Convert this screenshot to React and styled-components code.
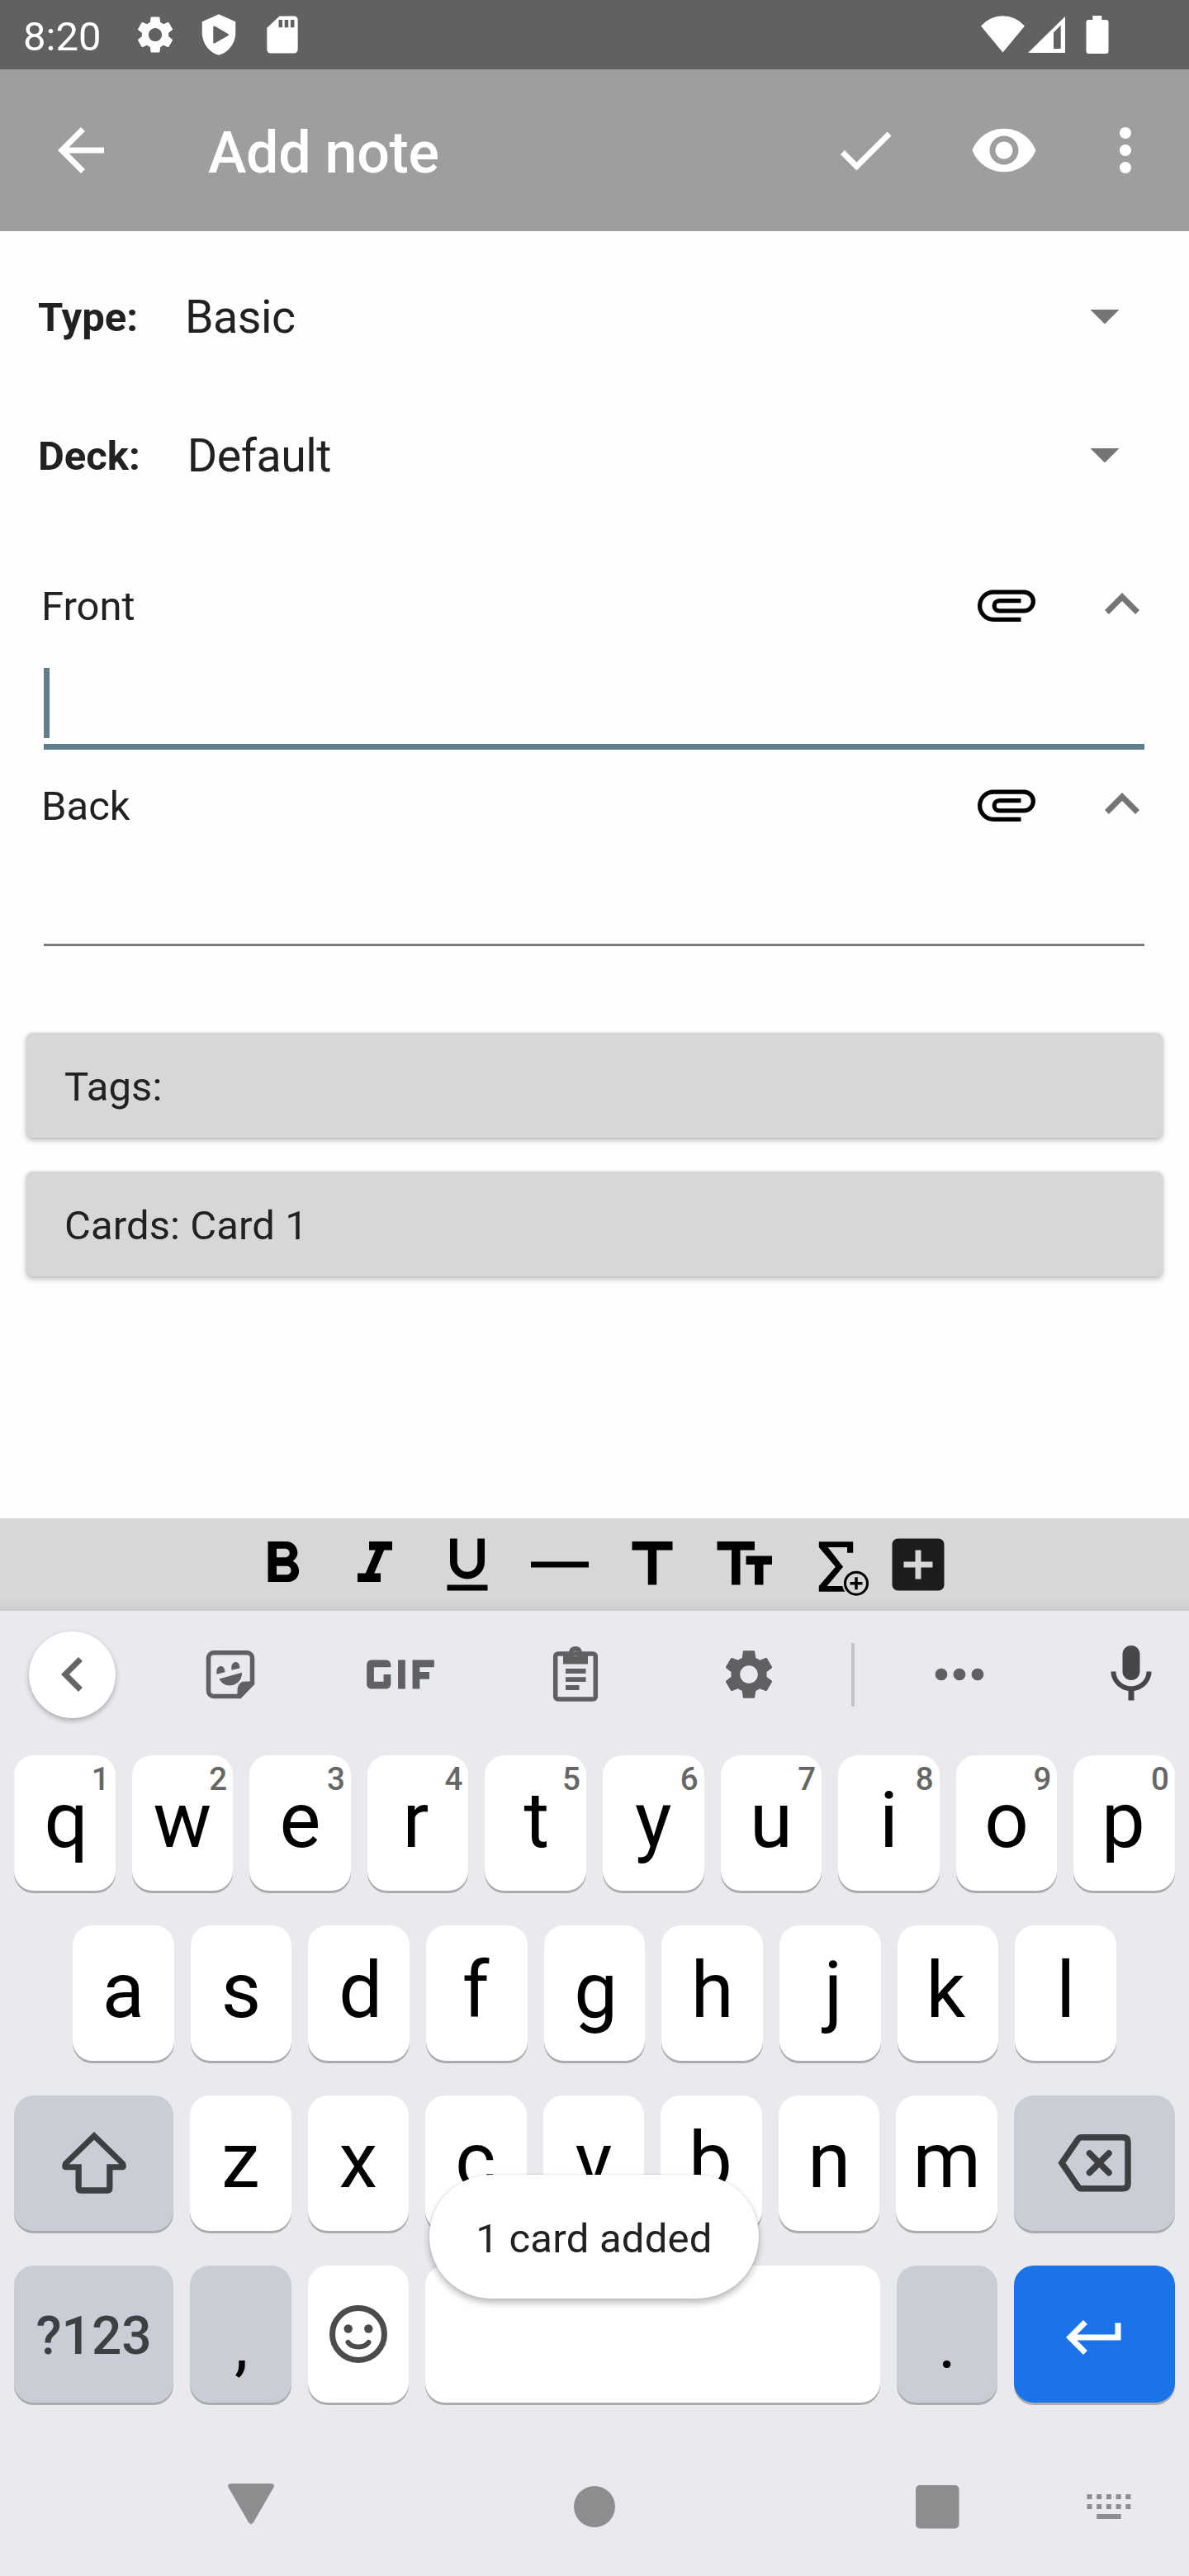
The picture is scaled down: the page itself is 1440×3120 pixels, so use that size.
import React from "react";
import styled, { createGlobalStyle } from "styled-components";
import {
  MdSettings,
  MdArrowBack,
  MdCheck,
  MdVisibility,
  MdMoreVert,
  MdMoreHoriz,
  MdMic,
  MdGif,
  MdArrowDropDown,
  MdExpandLess,
  MdChevronLeft,
  MdFormatBold,
  MdFormatItalic,
  MdFormatSize,
  MdTitle,
  MdAddBox,
} from "react-icons/md";

const GlobalStyle = createGlobalStyle`
  *, *::before, *::after { box-sizing: border-box; }
  body { margin: 0; background: #fefefe; }
  svg { display: block; flex: none; }
`;

const Screen = styled.div`
  position: relative;
  width: 1440px;
  height: 3120px;
  overflow: hidden;
  display: flex;
  flex-direction: column;
  background: #fefefe;
  color: #212121;
  font-family: Roboto, "Noto Sans", sans-serif;
`;

/* ---------- status bar ---------- */
const StatusBar = styled.header`
  height: 84px;
  flex: none;
  display: flex;
  align-items: center;
  padding: 0 97px 0 28px;
  background: #616161;
  color: #fff;
`;
const Clock = styled.span`
  width: 133px;
  height: 84px;
  font-size: 49px;
  line-height: 89px;
  white-space: nowrap;
`;
const Notifications = styled.div`
  display: flex;
  gap: 23px;
`;
const Signals = styled.div`
  margin-left: auto;
  display: flex;
  align-items: center;
`;

/* ---------- app bar ---------- */
const AppBar = styled.div`
  height: 196px;
  flex: none;
  display: flex;
  align-items: center;
  padding: 0 35px 0 56px;
  background: #9e9e9e;
  color: #fff;
`;
const Title = styled.h1`
  margin: 0 auto 0 112px;
  padding-top: 5px;
  font-size: 70px;
  font-weight: 500;
  line-height: 84px;
  letter-spacing: -0.3px;
`;
const Action = styled.div`
  margin-right: ${(p) => p.$gap || 0}px;
`;

/* ---------- form ---------- */
const Form = styled.main`
  height: 1559px;
  flex: none;
  display: flex;
  flex-direction: column;
  padding-top: 18px;
`;
const SelectRow = styled.div`
  height: 168px;
  flex: none;
  display: flex;
  align-items: center;
  padding: 0 60px 0 46px;
  svg { color: #757575; }
`;
const Label = styled.span`
  padding-top: 4px;
  margin-right: 57px;
  font-size: 49px;
  font-weight: 700;
`;
const Value = styled.span`
  flex: 1;
  padding-top: 5px;
  font-size: 55.5px;
  letter-spacing: -0.5px;
`;
const Field = styled.section`
  margin-top: ${(p) => p.$top}px;
`;
const FieldHead = styled.div`
  height: 84px;
  display: flex;
  align-items: center;
  padding: 0 39px 0 50px;
`;
const FieldName = styled.span`
  flex: 1;
  padding-top: 4px;
  font-size: 49px;
`;
const Clip = styled.div`
  margin-right: 56px;
  color: #000;
`;
const Collapse = styled.div`
  color: #757575;
`;
const Input = styled.div`
  height: ${(p) => (p.$focused ? 134 : 130)}px;
  margin: 0 54px 0 53px;
  padding-top: 35px;
  border-bottom: ${(p) => (p.$focused ? "7px solid #607d8b" : "3px solid #7a7a7a")};
`;
const Caret = styled.div`
  width: 7px;
  height: 85px;
  background: #607d8b;
`;
const Buttons = styled.div`
  margin: 105px 32px 0;
  display: flex;
  flex-direction: column;
  gap: 41px;
`;
const GreyButton = styled.div`
  height: 127px;
  display: flex;
  align-items: center;
  padding: 3px 46px 0;
  border-radius: 7px;
  background: #d6d8d7;
  box-shadow: 0 3px 7px rgba(0, 0, 0, 0.27), 0 0 3px rgba(0, 0, 0, 0.08);
  font-size: 49px;
  letter-spacing: 0.1px;
`;

/* ---------- formatting bar ---------- */
const FormatBar = styled.div`
  height: 112px;
  flex: none;
  display: flex;
  align-items: center;
  gap: 28px;
  padding-left: 300px;
  background: linear-gradient(to top, #cccecd 0, #d6d8d7 14px);
  color: #000;
`;
const Flipped = styled.div`
  transform: translateX(1.5px) scaleX(-1);
`;
const AddTool = styled.div`
  margin-left: -14px;
  color: #1c1c1c;
`;

/* ---------- keyboard ---------- */
const Keyboard = styled.div`
  flex: 1;
  display: flex;
  flex-direction: column;
  background: #e8eaed;
`;
const Strip = styled.div`
  height: 154px;
  flex: none;
  display: flex;
  align-items: center;
  padding-left: 35px;
  color: #5f6062;
`;
const StripItem = styled.div`
  margin-left: ${(p) => p.$gap}px;
  color: ${(p) => p.$color || "inherit"};
`;
const RoundButton = styled.div`
  width: 105px;
  height: 105px;
  display: flex;
  align-items: center;
  justify-content: center;
  border-radius: 50%;
  background: #fff;
  color: #656668;
  box-shadow: 0 3px 6px rgba(0, 0, 0, 0.28);
`;
const Divider = styled.div`
  width: 4px;
  height: 77px;
  margin-left: 88px;
  background: #c3c4c8;
`;
const Rows = styled.div`
  padding: 21px 17px 0;
  display: flex;
  flex-direction: column;
  gap: 42px;
`;
const Row = styled.div`
  height: ${(p) => p.$height || 164}px;
  padding: 0 ${(p) => p.$inset || 0}px;
  display: flex;
  gap: 20px;
`;
const fills = { light: "#fff", grey: "#cbcdd6", blue: "#1a73e8" };
const Key = styled.div`
  position: relative;
  flex: ${(p) => (p.$width ? `0 0 ${p.$width}px` : "1 1 0")};
  min-width: 0;
  display: flex;
  align-items: center;
  justify-content: center;
  padding-top: ${(p) => p.$drop || 0}px;
  padding-bottom: ${(p) => p.$lift || 0}px;
  border-radius: 24px;
  background: ${(p) => fills[p.$tone || "light"]};
  box-shadow: 0 3px 0 #a9abad;
  color: ${(p) => p.$color || "#000"};
  font-size: ${(p) => p.$size || 94}px;
  font-weight: ${(p) => p.$weight || 400};
  line-height: 1;
`;
/* Glyphs sit centred by their ink, so side bearings are evened out here. */
const Glyph = styled.span`
  margin-left: ${(p) => 2 * (p.$nudge || 0)}px;
`;
const Hint = styled.span`
  position: absolute;
  top: 10px;
  right: 7px;
  font-size: 38.5px;
  font-weight: 500;
  color: #666;
`;

/* ---------- system navigation ---------- */
const NavBar = styled.nav`
  height: 168px;
  margin-top: auto;
  display: flex;
  align-items: center;
  padding-left: 262px;
`;
const NavItem = styled.div`
  margin-left: ${(p) => p.$gap || 0}px;
`;

const Toast = styled.div`
  position: absolute;
  left: 520px;
  top: 2634px;
  width: 399px;
  height: 150px;
  display: flex;
  align-items: center;
  justify-content: center;
  padding-top: 4px;
  border-radius: 75px;
  background: #fff;
  box-shadow: 0 5px 9px rgba(0, 0, 0, 0.27), 0 0 3px rgba(0, 0, 0, 0.1);
  font-size: 49px;
  letter-spacing: 0.25px;
  white-space: nowrap;
`;

/* ---------- drawings ---------- */
const ShieldPlay = () => (
  <svg width="54" height="54" viewBox="0 0 24 24" fill="#fff">
    <path
      fillRule="evenodd"
      d="M12 1 3 5v6c0 5.55 3.84 10.74 9 12 5.16-1.26 9-6.45 9-12V5ZM9 7.8v8.3c0 .5.5.7.9.4L17 12.5c.4-.3.4-.8 0-1L9.9 7.4c-.4-.3-.9 0-.9.4Z"
    />
  </svg>
);
const SdCard = () => (
  <svg width="54" height="54" viewBox="0 0 24 24" fill="#fff">
    <path d="M18 2h-7.500L3.700 8.300V20c0 1.100.9 2 2 2H18.300c1.100 0 2-.9 2-2V4c0-1.100-.9-2-2-2zM12 8.100h-2V4h2zm3.200 0h-2V4h2zm3.200 0h-2V4h2z" />
  </svg>
);
const Wifi = () => (
  <svg width="57" height="46" viewBox="0 0 57 46" fill="#fff">
    <path d="M0 12.500A34.700 34.700 0 0 1 53 12.500L26.500 44.500Z" />
  </svg>
);
const Cell = () => (
  <svg width="70" height="46" viewBox="0 0 70 46" fill="#fff">
    <path fillRule="evenodd" d="M0 45 45 1V45ZM31 20.500V40h8.700V11.500Z" />
  </svg>
);
const Battery = () => (
  <svg width="28" height="46" viewBox="0 0 28 46" fill="#fff">
    <path d="M8.300 0h11v5H24.500Q27.500 5 27.500 8V43Q27.500 46 24.500 46H3.500Q.5 46 .5 43V8Q.5 5 3.500 5H8.300Z" />
  </svg>
);
const Paperclip = () => (
  <svg width="84" height="84" viewBox="0 0 24 24" fill="currentColor">
    <path d="M7.500 18A5.500 5.500 0 0 1 2 12.500 5.500 5.500 0 0 1 7.500 7H18a4 4 0 0 1 4 4 4 4 0 0 1-4 4H9.500A2.500 2.500 0 0 1 7 12.500 2.500 2.500 0 0 1 9.500 10H17v1.500H9.500a1 1 0 0 0-1 1 1 1 0 0 0 1 1H18A2.500 2.500 0 0 0 20.500 11 2.500 2.500 0 0 0 18 8.500H7.500a4 4 0 0 0-4 4 4 4 0 0 0 4 4H17V18Z" />
  </svg>
);
const UnderlineIcon = () => (
  <svg width="84" height="84" viewBox="0 0 24 24">
    <path d="M7.250 3v8a4.750 4.750 0 0 0 9.500 0V3" fill="none" stroke="#000" strokeWidth="2.500" />
    <path d="M5 19h14v2H5z" />
  </svg>
);
const RuleIcon = () => (
  <svg width="84" height="84" viewBox="0 0 24 24">
    <path d="M2 11h20v2H2z" />
  </svg>
);
const SigmaAdd = () => (
  <svg width="84" height="84" viewBox="0 0 84 84">
    <path d="M19.800 14.300H61.200V27.700H54V21H30.700L49.100 44.700 29.600 68H52V74.700H19.800V68L39.900 44.700 19.800 21Z" />
    <circle cx="65" cy="64.700" r="17" fill="#d6d8d7" />
    <circle cx="65" cy="64.700" r="13.500" fill="none" stroke="#000" strokeWidth="3" />
    <path d="M57.500 64.700h15M65 57.200v15" stroke="#000" strokeWidth="3.500" />
  </svg>
);
const Sticker = () => (
  <svg width="84" height="84" viewBox="0 0 84 84">
    <path
      d="M22 15.700H62A6.500 6.500 0 0 1 68.500 22.200V53L53.500 68.500H22A6.500 6.500 0 0 1 15.500 62V22.200A6.500 6.500 0 0 1 22 15.700Z"
      fill="none"
      stroke="currentColor"
      strokeWidth="5.500"
    />
    <g fill="currentColor">
      <path d="M71 50.500 54 71H50.500V60Q51.500 50.500 60 50.500Z" />
      <path d="M25.500 41.700c-1-5 1-9.500 4.700-9.700 3.300-.2 5.300 3 5.300 7.300Z" />
      <path d="M43.500 36.800c-1-5 1-9.500 4.700-9.700 3.300-.2 5.300 3 5.300 7.300Z" />
      <path d="M28.500 47.500 56 39.700C56.500 48 50 55.500 41 55.500 36 55.500 31 52.500 28.500 47.500Z" />
    </g>
  </svg>
);
const Clipboard = () => (
  <svg width="84" height="84" viewBox="0 0 84 84">
    <rect x="17.700" y="17" width="48.600" height="55" rx="3" fill="none" stroke="currentColor" strokeWidth="5.500" />
    <g fill="currentColor">
      <path
        fillRule="evenodd"
        d="M27 15H34Q35 8 42 8T50 15H57V29.500H27ZM42 13.800a3.200 3.200 0 1 0 0 6.400a3.200 3.200 0 1 0 0-6.400Z"
      />
      <path d="M30 35h24.500v6H30zM30 45.300h24.500v5.800H30zM30 55h16.500v6H30z" />
    </g>
  </svg>
);
const ShiftIcon = () => (
  <svg width="84" height="84" viewBox="71 2578 84 84" fill="#3e3f41">
    <path
      fillRule="evenodd"
      d="M113 2582 150.500 2618.500Q154.500 2628.300 146 2628.300H135.500V2650Q135.500 2656.700 129 2656.700H97Q90.500 2656.700 90.500 2650V2628.300H80Q71.500 2628.300 75.500 2618.500ZM113 2591.700 82.600 2621.200H97.800V2649.300H128.200V2621.200H143.400Z"
    />
  </svg>
);
const BackspaceIcon = () => (
  <svg width="96" height="84" viewBox="1276 2582 96 84" fill="none" stroke="#3e3f41" strokeWidth="7.500">
    <path d="M1284 2623.700 1304 2594.500Q1305.300 2592.800 1307 2592.800H1358Q1364 2592.800 1364 2598.500V2649Q1364 2654.700 1358 2654.700H1307Q1305.300 2654.700 1304 2653Z" />
    <path d="M1317.500 2612 1341 2635.500M1341 2612 1317.500 2635.500" strokeLinecap="round" />
  </svg>
);
const SmileIcon = () => (
  <svg width="84" height="84" viewBox="0 0 84 84" fill="none" stroke="#4a4b4b">
    <circle cx="42" cy="42" r="31.500" strokeWidth="7" />
    <circle cx="29.700" cy="35.500" r="5.200" fill="#4a4b4b" stroke="none" />
    <circle cx="54.300" cy="35.500" r="5.200" fill="#4a4b4b" stroke="none" />
    <path d="M29.500 52Q33.500 57.500 42 57.500T54.500 52" strokeWidth="6" strokeLinecap="round" />
  </svg>
);
const ReturnIcon = () => (
  <svg width="84" height="84" viewBox="0 0 24 24" fill="#fff">
    <path d="M19 7v4H5.830l3.580-3.590L8 6l-6 6 6 6 1.410-1.410L5.830 13H21V7z" />
  </svg>
);
const NavDown = () => (
  <svg width="84" height="84" viewBox="0 0 84 84" fill="#8c8d8f">
    <path d="M18 14H66Q71 14 69.500 18.500L45 61Q42 65 39 61L14.500 18.500Q13 14 18 14Z" />
  </svg>
);
const NavHome = () => (
  <svg width="84" height="84" viewBox="0 0 84 84" fill="#8c8d8f">
    <circle cx="42" cy="42" r="25" />
  </svg>
);
const NavRecent = () => (
  <svg width="84" height="84" viewBox="0 0 84 84" fill="#8c8d8f">
    <rect x="16" y="16" width="52.500" height="52.500" rx="5" />
  </svg>
);
const NavKeyboard = () => (
  <svg width="84" height="84" viewBox="0 0 84 84" fill="#8c8d8f">
    {[27, 39].map((y) =>
      [0, 1, 2, 3, 4].map((i) => <rect key={`${y}-${i}`} x={15.5 + i * 11.7} y={y} width="6" height="6" />)
    )}
    <rect x="27.200" y="51" width="29.400" height="6" />
  </svg>
);

const topRow = [..."qwertyuiop"];
const homeRow = [..."asdfghjkl"];
const bottomRow = [..."zxcvbnm"];
const nudges = { q: 2, r: -2.6, t: 1.2, p: -1.2, d: 2, f: -1.3, g: 1.7, j: 4, k: -2.6, c: -0.5, b: -1.2 };

const Letter = ({ char, hint }) => (
  <Key $lift={6}>
    <Glyph $nudge={nudges[char]}>{char}</Glyph>
    {hint && <Hint>{hint}</Hint>}
  </Key>
);

const SelectLine = ({ label, value }) => (
  <SelectRow>
    <Label>{label}</Label>
    <Value>{value}</Value>
    <MdArrowDropDown size={84} />
  </SelectRow>
);

const NoteField = ({ name, focused, top }) => (
  <Field $top={top}>
    <FieldHead>
      <FieldName>{name}</FieldName>
      <Clip>
        <Paperclip />
      </Clip>
      <Collapse>
        <MdExpandLess size={84} />
      </Collapse>
    </FieldHead>
    <Input $focused={focused}>{focused && <Caret />}</Input>
  </Field>
);

export default function App() {
  return (
    <Screen>
      <GlobalStyle />
      <StatusBar>
        <Clock>8:20</Clock>
        <Notifications>
          <MdSettings size={54} />
          <ShieldPlay />
          <SdCard />
        </Notifications>
        <Signals>
          <Wifi />
          <Cell />
          <Battery />
        </Signals>
      </StatusBar>

      <AppBar>
        <MdArrowBack size={84} />
        <Title>Add note</Title>
        <Action $gap={84}>
          <MdCheck size={84} />
        </Action>
        <Action $gap={63}>
          <MdVisibility size={84} />
        </Action>
        <Action>
          <MdMoreVert size={84} />
        </Action>
      </AppBar>

      <Form>
        <SelectLine label="Type:" value="Basic" />
        <SelectLine label="Deck:" value="Default" />
        <NoteField name="Front" focused top={56} />
        <NoteField name="Back" top={24} />
        <Buttons>
          <GreyButton>Tags:</GreyButton>
          <GreyButton>Cards: Card 1</GreyButton>
        </Buttons>
      </Form>

      <FormatBar>
        <MdFormatBold size={84} />
        <MdFormatItalic size={84} />
        <UnderlineIcon />
        <RuleIcon />
        <MdTitle size={84} />
        <Flipped>
          <MdFormatSize size={84} />
        </Flipped>
        <SigmaAdd />
        <AddTool>
          <MdAddBox size={84} />
        </AddTool>
      </FormatBar>

      <Keyboard>
        <Strip>
          <RoundButton>
            <MdChevronLeft size={84} />
          </RoundButton>
          <StripItem $gap={96.5}>
            <Sticker />
          </StripItem>
          <StripItem $gap={94.5}>
            <MdGif size={140} />
          </StripItem>
          <StripItem $gap={99.5}>
            <Clipboard />
          </StripItem>
          <StripItem $gap={132}>
            <MdSettings size={72} />
          </StripItem>
          <Divider />
          <StripItem $gap={83}>
            <MdMoreHoriz size={88} />
          </StripItem>
          <StripItem $gap={122} $color="#464749">
            <MdMic size={84} />
          </StripItem>
        </Strip>
        <Rows>
          <Row>
            {topRow.map((c, i) => (
              <Letter key={c} char={c} hint={String((i + 1) % 10)} />
            ))}
          </Row>
          <Row $inset={71}>
            {homeRow.map((c) => (
              <Letter key={c} char={c} />
            ))}
          </Row>
          <Row>
            <Key $tone="grey" $width={193}>
              <ShiftIcon />
            </Key>
            {bottomRow.map((c) => (
              <Letter key={c} char={c} />
            ))}
            <Key $tone="grey" $width={195}>
              <BackspaceIcon />
            </Key>
          </Row>
          <Row $height={166}>
            <Key $tone="grey" $width={193} $size={64} $weight={500} $color="#3e3f41" $drop={5}>
              ?123
            </Key>
            <Key $tone="grey" $width={122.5} $size={84} $drop={25}>
              <Glyph $nudge={1}>,</Glyph>
            </Key>
            <Key $width={122.5}>
              <SmileIcon />
            </Key>
            <Key />
            <Key $tone="grey" $width={122.5} $size={84} $drop={25}>
              <Glyph $nudge={0.4}>.</Glyph>
            </Key>
            <Key $tone="blue" $width={195} $drop={7}>
              <ReturnIcon />
            </Key>
          </Row>
        </Rows>
        <NavBar>
          <NavItem>
            <NavDown />
          </NavItem>
          <NavItem $gap={332}>
            <NavHome />
          </NavItem>
          <NavItem $gap={331}>
            <NavRecent />
          </NavItem>
          <NavItem $gap={124}>
            <NavKeyboard />
          </NavItem>
        </NavBar>
      </Keyboard>

      <Toast>1 card added</Toast>
    </Screen>
  );
}
